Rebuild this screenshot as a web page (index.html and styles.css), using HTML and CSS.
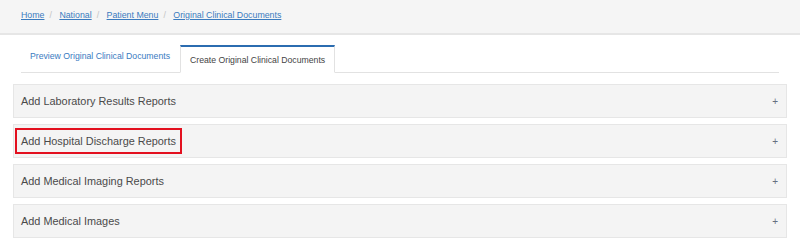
FILE: index.html
```html
<!DOCTYPE html>
<html lang="en">
<head>
<meta charset="UTF-8">
<title>Original Clinical Documents</title>
<link rel="stylesheet" href="styles.css">
</head>
<body>
  <div class="breadcrumb-bar">
    <a href="#">Home</a><span class="sep">/</span>
    <a href="#">National</a><span class="sep">/</span>
    <a href="#">Patient Menu</a><span class="sep">/</span>
    <a href="#">Original Clinical Documents</a>
  </div>

  <div class="content">
    <ul class="tabs">
      <li class="tab"><a href="#">Preview Original Clinical Documents</a></li>
      <li class="tab active"><a href="#">Create Original Clinical Documents</a></li>
    </ul>

    <div class="panel">
      <span class="panel-title">Add Laboratory Results Reports</span>
      <span class="plus">+</span>
    </div>
    <div class="panel">
      <span class="panel-title highlight">Add Hospital Discharge Reports</span>
      <span class="plus">+</span>
    </div>
    <div class="panel">
      <span class="panel-title">Add Medical Imaging Reports</span>
      <span class="plus">+</span>
    </div>
    <div class="panel">
      <span class="panel-title">Add Medical Images</span>
      <span class="plus">+</span>
    </div>
  </div>
</body>
</html>
```

FILE: styles.css
```css
/* page basics */
body {
    margin: 0;
    background-color: white;
    font-family: "Liberation Sans", Arial, sans-serif;
    color: #4a4a4a;
}

/* breadcrumb strip at the top */
.breadcrumb-bar {
    height: 35px;
    box-sizing: border-box;
    padding: 10px 21px 0 21px;
    background-color: #f5f5f5;
    border-bottom: 2px solid #e6e6e6;
    font-size: 8.8px;
}

.breadcrumb-bar a {
    color: #3a7bbf;
    text-decoration: underline;
}

.breadcrumb-bar .sep {
    color: #c4c4c4;
    margin: 0 5px;
}

.content {
    padding: 10px 13px 0 13px;
}

/* tab strip */
.tabs {
    display: flex;
    list-style: none;
    margin: 0 8px 11px 8px;
    padding: 0;
    border-bottom: 1px solid #e2e2e2;
    font-size: 8.7px;
}

.tab a {
    display: block;
    padding: 6px 10px 9px 9px;
    color: #3a7bbf;
    text-decoration: none;
}

.tab.active {
    margin-bottom: -1px;
    background-color: white;
    border: 1px solid #e2e2e2;
    border-top: 2px solid #2b6cb0;
    border-bottom-color: white;
}

.tab.active a {
    padding: 8px 9px 7px 9px;
    color: #444;
}

/* collapsible panels */
.panel {
    display: flex;
    align-items: center;
    justify-content: space-between;
    height: 34px;
    box-sizing: border-box;
    margin-bottom: 6px;
    padding: 0 8px 0 1px;
    background-color: #f4f4f4;
    border: 1px solid #e6e6e6;
    font-size: 10.9px;
}

.panel-title {
    padding: 5px 4px;
    border: 2px solid transparent;
}

.panel-title.highlight {
    border-color: #e3101f;
}

.plus {
    color: #667080;
    font-size: 10px;
}
```
